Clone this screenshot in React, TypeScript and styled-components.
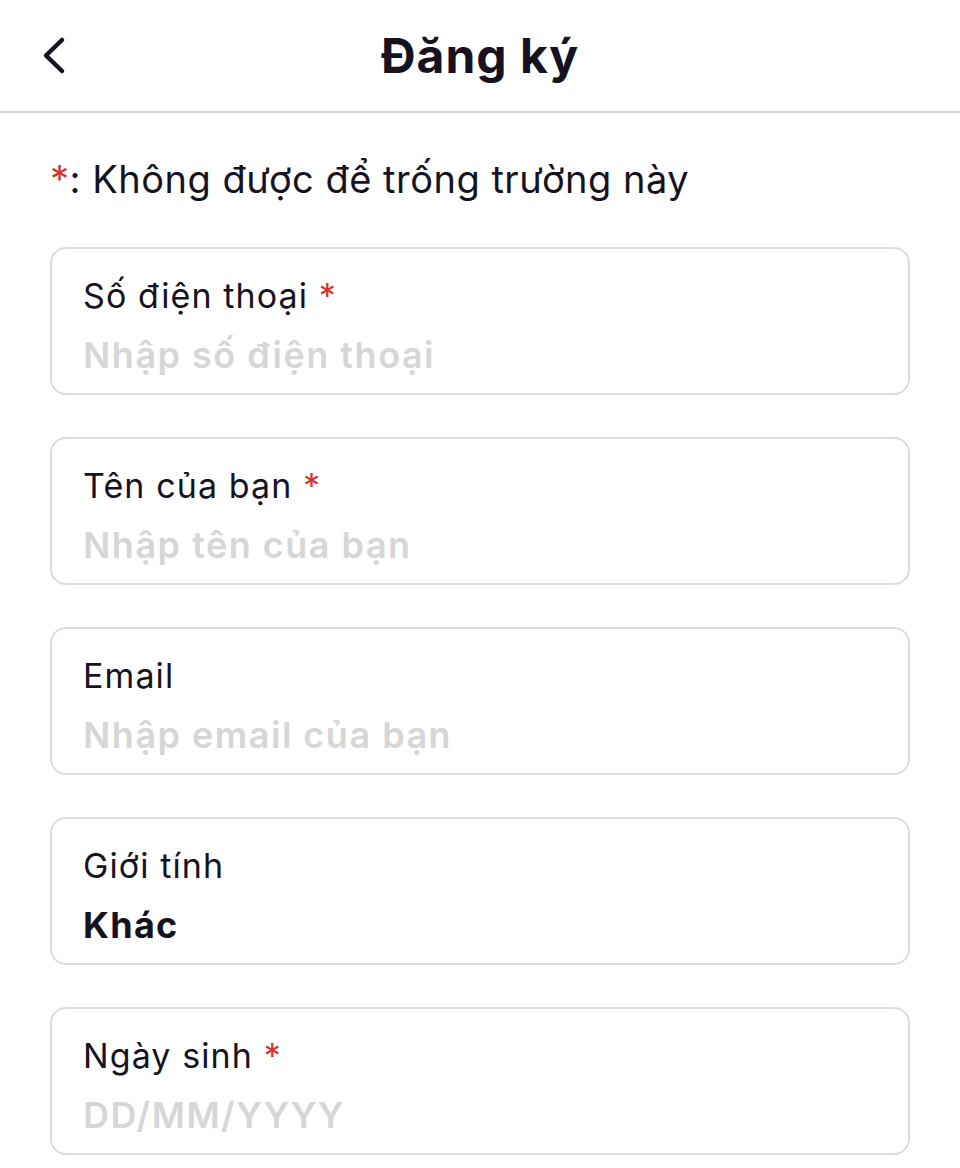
import React from 'react'
import styled, { createGlobalStyle } from 'styled-components'

const GlobalStyle = createGlobalStyle`
  html, body {
    margin: 0;
    padding: 0;
    background: #ffffff;
  }
  body {
    font-family: Inter, 'Noto Sans', 'Liberation Sans', sans-serif;
    color: #16131f;
  }
  * {
    box-sizing: border-box;
  }
`

const Page = styled.div`
  width: 960px;
  min-height: 1168px;
  background: #ffffff;
`

const Header = styled.header`
  position: relative;
  height: 113px;
  display: flex;
  align-items: center;
  justify-content: center;
  border-bottom: 2px solid #d6d6d6;
`

const BackButton = styled.button`
  position: absolute;
  left: 40px;
  top: 32px;
  width: 28px;
  height: 48px;
  padding: 0;
  border: none;
  background: none;
  display: flex;
  cursor: pointer;
`

const Title = styled.h1`
  margin: 0;
  font-size: 48px;
  font-weight: 700;
  letter-spacing: 1px;
  color: #16131f;
`

const Content = styled.main`
  padding: 42px 50px 0;
  display: flex;
  flex-direction: column;
`

const Note = styled.p`
  margin: 0 0 44px;
  font-size: 38px;
  line-height: 48px;
  letter-spacing: 0.5px;
  color: #16131f;
`

const Required = styled.span`
  color: #d8342c;
`

const Fields = styled.div`
  display: flex;
  flex-direction: column;
  gap: 42px;
`

const Card = styled.label`
  display: flex;
  flex-direction: column;
  gap: 13px;
  height: 148px;
  padding: 25px 31px 0;
  border: 2px solid #dcdcdc;
  border-radius: 16px;
  cursor: text;
`

const FieldLabel = styled.span`
  font-size: 34px;
  line-height: 44px;
  letter-spacing: 1.1px;
  color: #16131f;
`

const FieldInput = styled.input`
  width: 100%;
  height: 48px;
  padding: 0;
  border: none;
  outline: none;
  background: transparent;
  font-family: inherit;
  font-size: 36px;
  font-weight: 600;
  letter-spacing: 1.5px;
  color: #16131f;

  &::placeholder {
    color: #d6d6d6;
    opacity: 1;
  }
`

const FieldValue = styled.span`
  font-size: 36px;
  line-height: 48px;
  font-weight: 700;
  letter-spacing: 1.3px;
  color: #16131f;
`

const ChevronLeft = () => (
  <svg width="28" height="48" viewBox="0 0 28 48" fill="none">
    <path
      d="M22 8 L6 23.5 L22 39"
      stroke="#16131f"
      strokeWidth="4.5"
      strokeLinecap="round"
      strokeLinejoin="round"
    />
  </svg>
)

interface FieldProps {
  label: string
  placeholder?: string
  value?: string
  required?: boolean
}

const Field: React.FC<FieldProps> = ({ label, placeholder, value, required }) => (
  <Card>
    <FieldLabel>
      {label}
      {required && <Required> *</Required>}
    </FieldLabel>
    {value ? (
      <FieldValue>{value}</FieldValue>
    ) : (
      <FieldInput placeholder={placeholder} />
    )}
  </Card>
)

const App: React.FC = () => (
  <Page>
    <GlobalStyle />
    <Header>
      <BackButton aria-label="Quay lại">
        <ChevronLeft />
      </BackButton>
      <Title>Đăng ký</Title>
    </Header>
    <Content>
      <Note>
        <Required>*</Required>: Không được để trống trường này
      </Note>
      <Fields>
        <Field label="Số điện thoại" placeholder="Nhập số điện thoại" required />
        <Field label="Tên của bạn" placeholder="Nhập tên của bạn" required />
        <Field label="Email" placeholder="Nhập email của bạn" />
        <Field label="Giới tính" value="Khác" />
        <Field label="Ngày sinh" placeholder="DD/MM/YYYY" required />
      </Fields>
    </Content>
  </Page>
)

export default App
